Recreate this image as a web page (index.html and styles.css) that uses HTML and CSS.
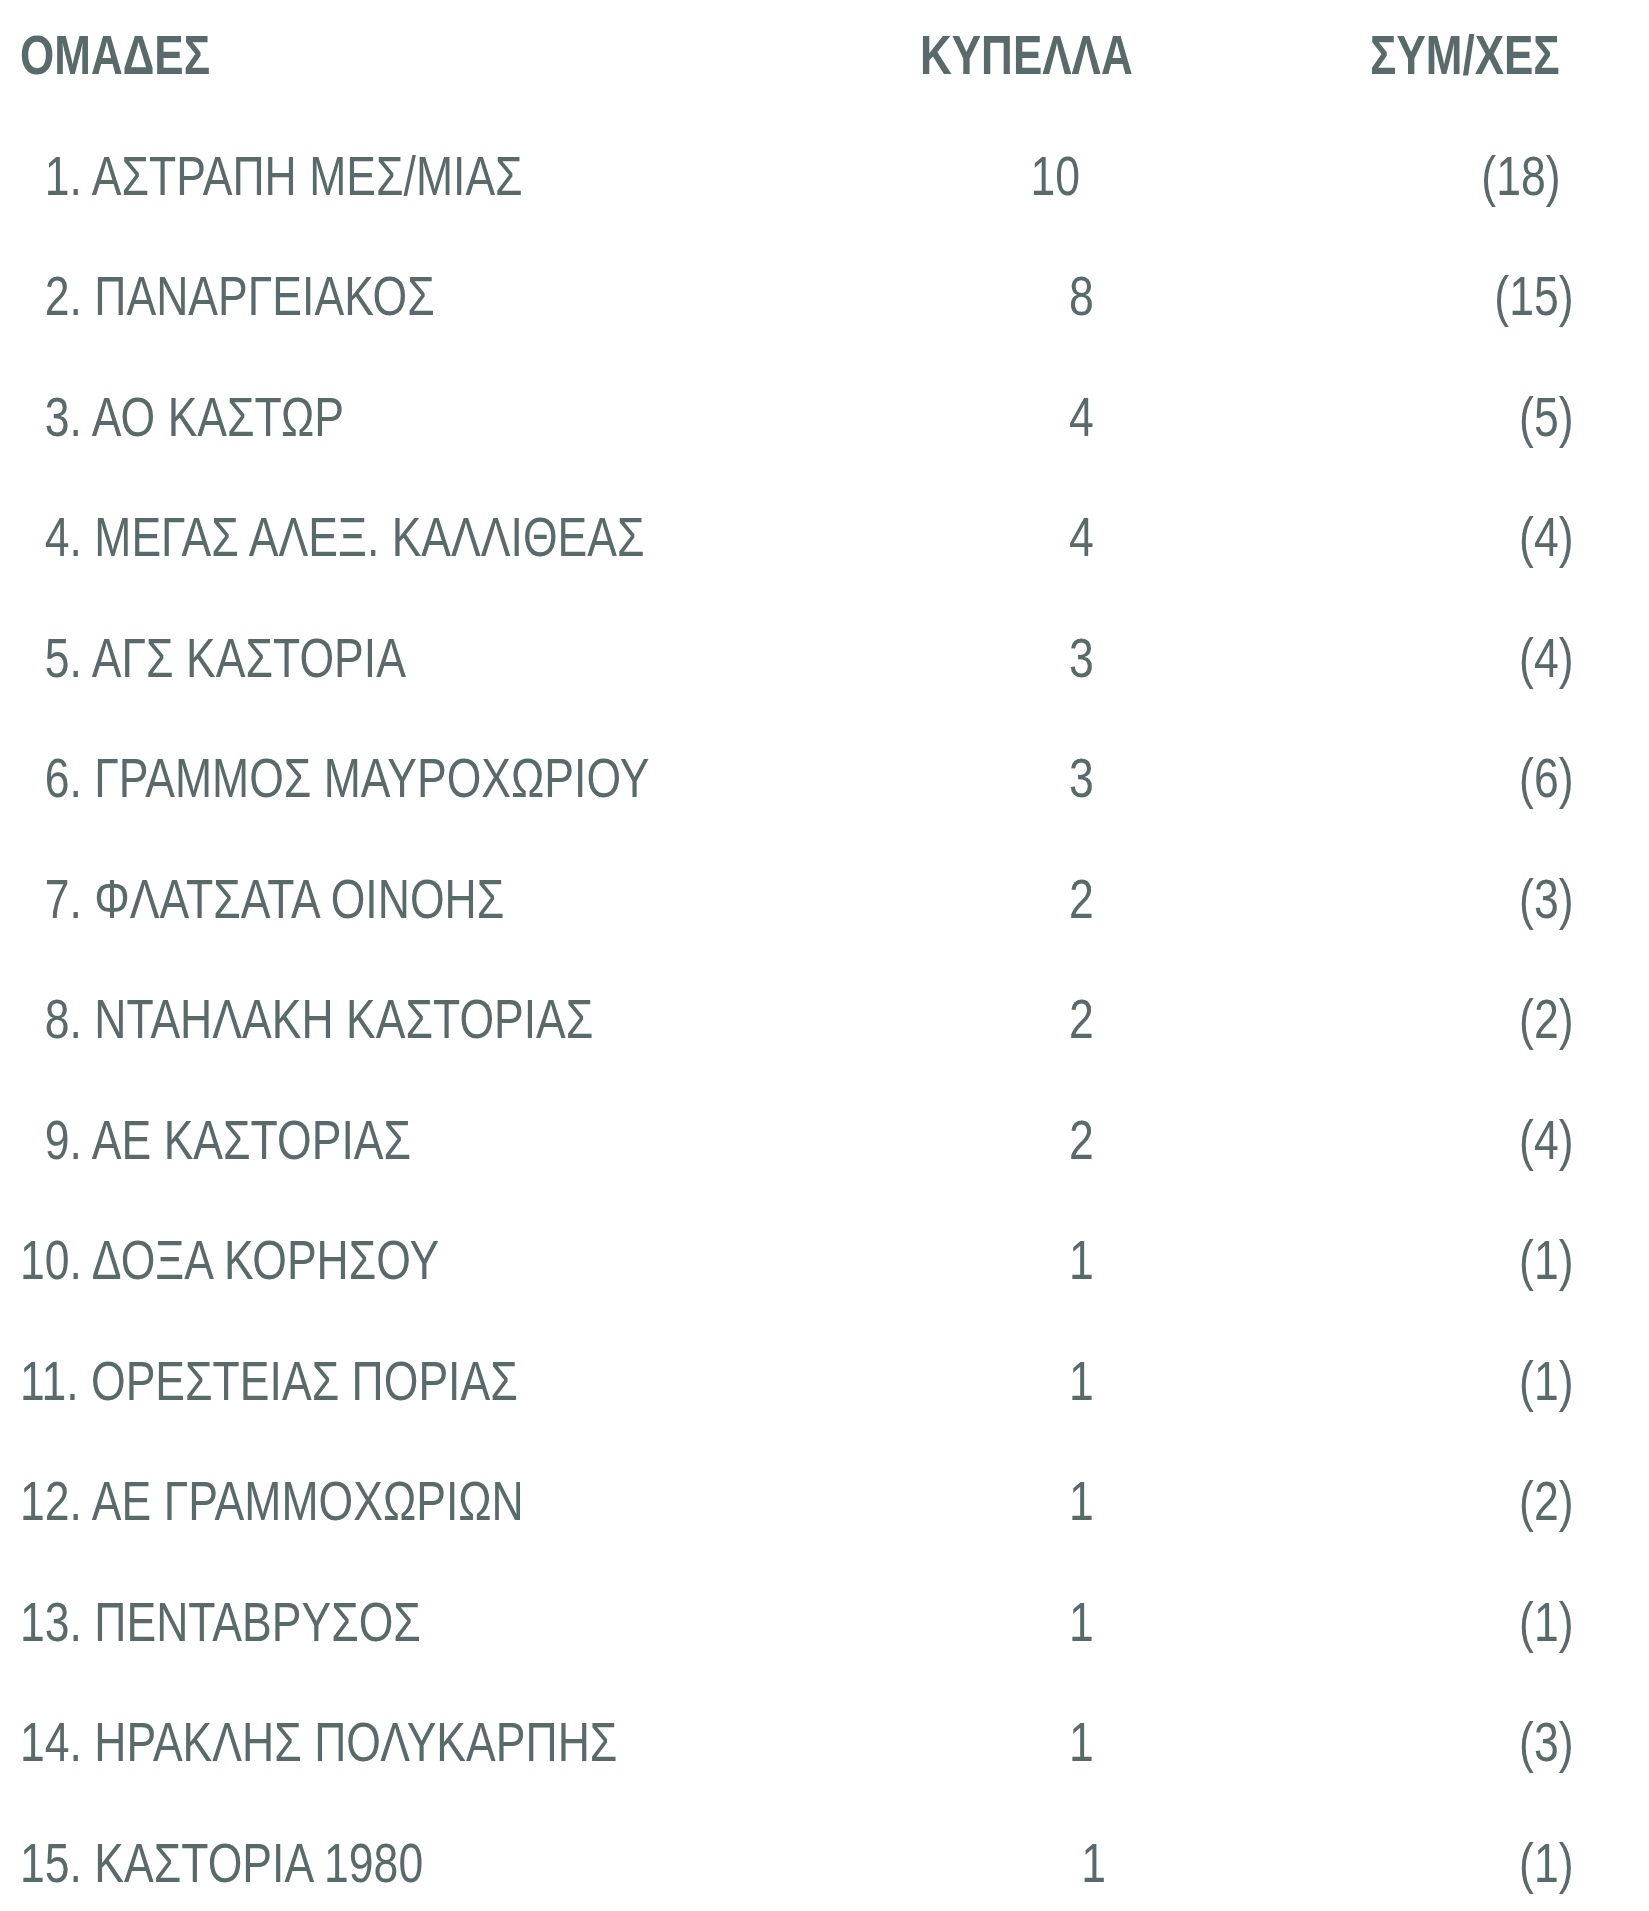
FILE: index.html
```html
<!DOCTYPE html>
<html lang="el">
<head>
<meta charset="utf-8">
<title>Κύπελλα</title>
<link rel="stylesheet" href="styles.css">
</head>
<body>
<div class="table">
  <div class="row head">
    <div class="name">ΟΜΑΔΕΣ</div>
    <div class="cup">ΚΥΠΕΛΛΑ</div>
    <div class="fin">ΣΥΜ/ΧΕΣ</div>
  </div>
  <div class="row first"><div class="name pad">1. ΑΣΤΡΑΠΗ ΜΕΣ/ΜΙΑΣ</div><div class="cup">10</div><div class="fin">(18)</div></div>
  <div class="row"><div class="name pad">2. ΠΑΝΑΡΓΕΙΑΚΟΣ</div><div class="cup">8</div><div class="fin">(15)</div></div>
  <div class="row"><div class="name pad">3. ΑΟ ΚΑΣΤΩΡ</div><div class="cup">4</div><div class="fin">(5)</div></div>
  <div class="row"><div class="name pad">4. ΜΕΓΑΣ ΑΛΕΞ. ΚΑΛΛΙΘΕΑΣ</div><div class="cup">4</div><div class="fin">(4)</div></div>
  <div class="row"><div class="name pad">5. ΑΓΣ ΚΑΣΤΟΡΙΑ</div><div class="cup">3</div><div class="fin">(4)</div></div>
  <div class="row"><div class="name pad">6. ΓΡΑΜΜΟΣ ΜΑΥΡΟΧΩΡΙΟΥ</div><div class="cup">3</div><div class="fin">(6)</div></div>
  <div class="row"><div class="name pad">7. ΦΛΑΤΣΑΤΑ ΟΙΝΟΗΣ</div><div class="cup">2</div><div class="fin">(3)</div></div>
  <div class="row"><div class="name pad">8. ΝΤΑΗΛΑΚΗ ΚΑΣΤΟΡΙΑΣ</div><div class="cup">2</div><div class="fin">(2)</div></div>
  <div class="row"><div class="name pad">9. ΑΕ ΚΑΣΤΟΡΙΑΣ</div><div class="cup">2</div><div class="fin">(4)</div></div>
  <div class="row"><div class="name">10. ΔΟΞΑ ΚΟΡΗΣΟΥ</div><div class="cup">1</div><div class="fin">(1)</div></div>
  <div class="row"><div class="name">11. ΟΡΕΣΤΕΙΑΣ ΠΟΡΙΑΣ</div><div class="cup">1</div><div class="fin">(1)</div></div>
  <div class="row"><div class="name">12. ΑΕ ΓΡΑΜΜΟΧΩΡΙΩΝ</div><div class="cup">1</div><div class="fin">(2)</div></div>
  <div class="row"><div class="name">13. ΠΕΝΤΑΒΡΥΣΟΣ</div><div class="cup">1</div><div class="fin">(1)</div></div>
  <div class="row"><div class="name">14. ΗΡΑΚΛΗΣ ΠΟΛΥΚΑΡΠΗΣ</div><div class="cup">1</div><div class="fin">(3)</div></div>
  <div class="row last"><div class="name">15. ΚΑΣΤΟΡΙΑ 1980</div><div class="cup">1</div><div class="fin">(1)</div></div>
</div>
</body>
</html>
```

FILE: styles.css
```css
html, body {
  margin: 0;
  padding: 0;
  background: #ffffff;
}

body {
  font-family: "Liberation Sans Narrow", "Liberation Sans", Arial, sans-serif;
  font-size: 55px;
  color: #586a6a;
}

.table {
  display: flex;
  flex-direction: column;
  gap: 57.5px;
  padding: 24px 0 0 20px;
}

.row {
  display: grid;
  grid-template-columns: 880px 210px 470px;
  line-height: 63px;
  white-space: nowrap;
}

/* condensed rendering, like Arial Narrow */
.name {
  transform: scaleX(0.81);
  transform-origin: left center;
}

.row .cup,
.row .fin {
  text-align: right;
  transform: scaleX(0.81);
  transform-origin: right center;
}

.row .cup {
  padding-right: 20px;
}

.row .fin {
  padding-right: 8px;
}

.pad {
  padding-left: 1ch;
}

.head {
  font-weight: bold;
}

.head .name,
.head .cup,
.head .fin {
  text-align: left;
  transform: scaleX(0.8);
  transform-origin: left center;
}

.head .cup {
  padding: 0 0 0 25px;
}

.head .fin {
  padding: 0 0 0 325px;
}

.first .cup {
  padding-right: 37px;
}

.first .fin {
  padding-right: 24px;
}

.last .cup {
  padding-right: 5px;
}
```
